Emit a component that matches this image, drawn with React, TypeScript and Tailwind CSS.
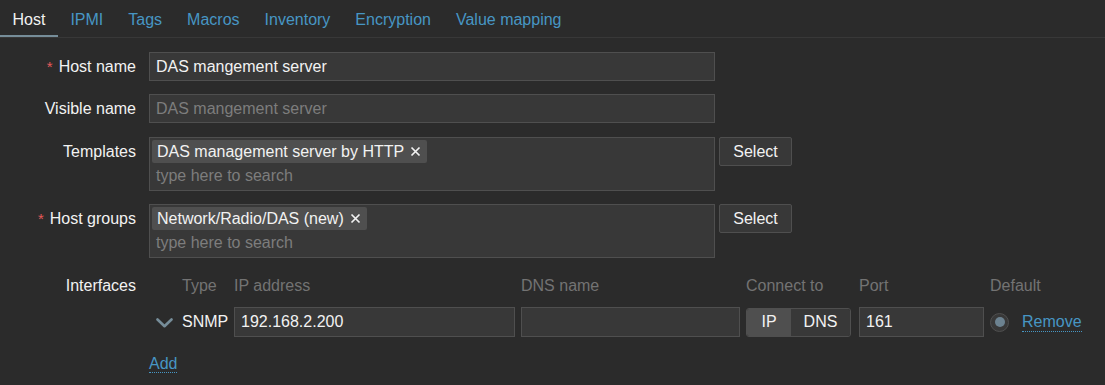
const tabs = ["Host", "IPMI", "Tags", "Macros", "Inventory", "Encryption", "Value mapping"];

function Chevron() {
  return (
    <svg width="17" height="10" viewBox="0 0 17 10">
      <path d="M1.5 1.5 L8.5 8.2 L15.5 1.5" fill="none" stroke="#768d99" strokeWidth="2.6" strokeLinecap="round" strokeLinejoin="round" />
    </svg>
  );
}

function Cross() {
  return (
    <svg width="11" height="11" viewBox="0 0 11 11">
      <path d="M1.5 1.5 L9.5 9.5 M9.5 1.5 L1.5 9.5" stroke="#f2f2f2" strokeWidth="1.7" />
    </svg>
  );
}

function Label({ text, required }: { text: string; required?: boolean }) {
  return (
    <div className="h-[29px] flex items-center justify-end whitespace-nowrap text-[#f2f2f2]">
      {required && <span className="text-[#e45959] mr-[6px] text-[15px]">*</span>}
      {text}
    </div>
  );
}

function Multiselect({ tag }: { tag: string }) {
  return (
    <div className="flex items-start gap-[4px]">
      <div className="w-[566px] h-[54px] border border-[#4f4f4f] bg-[#383838] px-[2px] pt-[2px]">
        <div className="flex">
          <span className="h-[23px] flex items-center gap-[6px] pl-[5px] pr-[6px] rounded-[2px] bg-[#4f4f4f] text-[#f2f2f2] whitespace-nowrap">
            {tag}
            <Cross />
          </span>
        </div>
        <div className="h-[25px] flex items-center pl-[4px] text-[#7d7d7d]">type here to search</div>
      </div>
      <button className="w-[73px] h-[29px] rounded-[2px] border border-[#4f4f4f] bg-[#383838] text-[#f2f2f2]">
        Select
      </button>
    </div>
  );
}

export default function App() {
  return (
    <div className="min-h-screen bg-[#2b2b2b] font-['Liberation_Sans',Arial,sans-serif] text-[16px] leading-[18px]">
      <div className="flex h-[38px] border-b border-[#383838]">
        {tabs.map((t, i) =>
          i === 0 ? (
            <div key={t} className="h-[37px] px-[12.5px] pt-[4px] flex items-center border-b-2 border-[#768d99] text-[#f2f2f2]">
              {t}
            </div>
          ) : (
            <div key={t} className="h-[37px] px-[12.5px] pt-[4px] flex items-center border-b-2 border-transparent text-[#4796c4]">
              {t}
            </div>
          )
        )}
      </div>

      <div className="pt-[14px] grid grid-cols-[136px_auto] gap-x-[13px] gap-y-[13px] items-start">
        <Label text="Host name" required />
        <div className="w-[566px] h-[29px] border border-[#4f4f4f] bg-[#383838] pl-[6px] flex items-center text-[#f2f2f2]">
          DAS mangement server
        </div>

        <Label text="Visible name" />
        <div className="w-[566px] h-[29px] border border-[#4f4f4f] bg-[#383838] pl-[6px] flex items-center text-[#7d7d7d]">
          DAS mangement server
        </div>

        <div className="mt-[1px]">
          <Label text="Templates" />
        </div>
        <div className="mt-[1px]">
          <Multiselect tag="DAS management server by HTTP" />
        </div>

        <Label text="Host groups" required />
        <Multiselect tag="Network/Radio/DAS (new)" />

        <div className="mt-[6px] flex justify-end text-[#f2f2f2]">Interfaces</div>
        <div className="mt-[6px]">
          <div className="grid grid-cols-[33px_52px_287px_225px_113px_131px_32px_auto] items-center text-[#737373] whitespace-nowrap">
            <span />
            <span>Type</span>
            <span>IP address</span>
            <span>DNS name</span>
            <span>Connect to</span>
            <span>Port</span>
            <span>Default</span>
            <span />
          </div>
          <div className="mt-[12px] grid grid-cols-[33px_52px_287px_225px_113px_131px_32px_auto] items-center text-[#f2f2f2] whitespace-nowrap">
            <div className="pl-[7px] pt-[2px] flex items-center">
              <Chevron />
            </div>
            <span>SNMP</span>
            <div className="w-[281px] h-[30px] border border-[#4f4f4f] bg-[#383838] pl-[6px] flex items-center">
              192.168.2.200
            </div>
            <div className="w-[219px] h-[30px] border border-[#4f4f4f] bg-[#383838]" />
            <div className="w-[105px] h-[29px] flex rounded-[3px] border border-[#4f4f4f] overflow-hidden">
              <span className="w-[44px] bg-[#4f4f4f] flex items-center justify-center">IP</span>
              <span className="flex-1 bg-[#383838] flex items-center justify-center">DNS</span>
            </div>
            <div className="w-[125px] h-[30px] border border-[#4f4f4f] bg-[#383838] pl-[6px] flex items-center">161</div>
            <div className="w-[19px] h-[19px] rounded-full border border-[#4f4f4f] bg-[#383838] flex items-center justify-center">
              <span className="w-[10px] h-[10px] rounded-full bg-[#6c8290]" />
            </div>
            <span className="text-[#4796c4] border-b border-dotted border-[#4796c4] justify-self-start">Remove</span>
          </div>
          <div className="mt-[18px]">
            <span className="text-[#4796c4] border-b border-dotted border-[#4796c4]">Add</span>
          </div>
        </div>
      </div>
    </div>
  );
}
